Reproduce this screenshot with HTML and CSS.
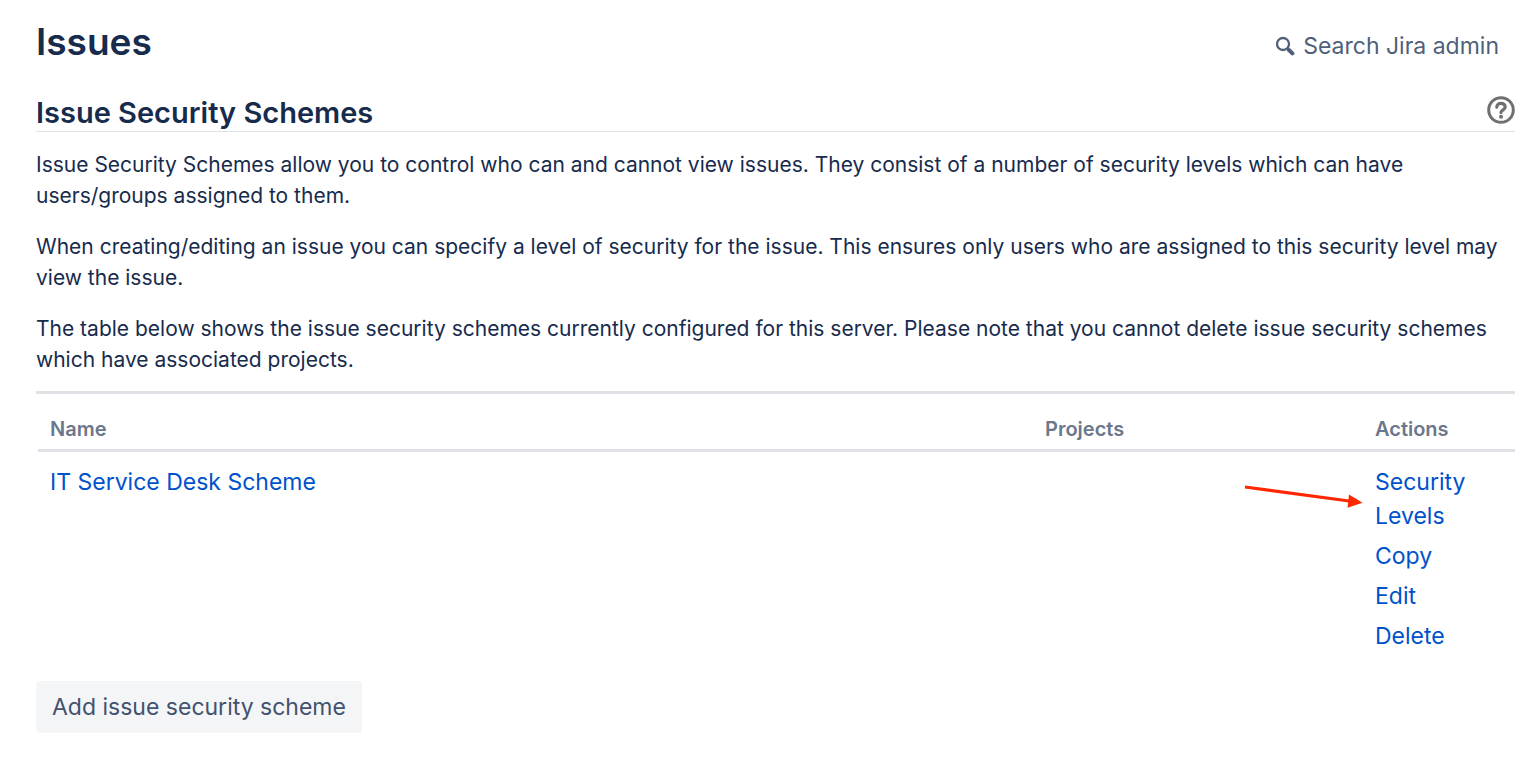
FILE: index.html
```html
<!DOCTYPE html>
<html lang="en">
<head>
  <meta charset="UTF-8">
  <meta name="viewport" content="width=device-width, initial-scale=1.0">
  <title>Issue Security Schemes</title>
  <link rel="stylesheet" href="styles.css">
</head>
<body>
  <header class="page-header">
    <h1>Issues</h1>
    <button type="button" class="admin-search">
      <svg class="search-icon" viewBox="0 0 20 20" aria-hidden="true">
        <circle cx="8" cy="8" r="6" fill="none" stroke="currentColor" stroke-width="2.3"/>
        <path d="M12.2 12.2l1.6 1.6" stroke="currentColor" stroke-width="2.6"/>
        <path d="M14 14l3.4 3.4" stroke="currentColor" stroke-width="4" stroke-linecap="round"/>
      </svg>
      Search Jira admin
    </button>
  </header>

  <main>
    <div class="section-header">
      <h2>Issue Security Schemes</h2>
      <a href="#" class="help-link" aria-label="Help">
        <svg class="help-icon" viewBox="0 0 28 28" aria-hidden="true">
          <circle cx="14" cy="14" r="12.3" fill="none" stroke="currentColor" stroke-width="3"/>
          <path d="M9.8 11.2c0-2.4 1.8-3.9 4.2-3.9s4.2 1.5 4.2 3.7c0 2.9-4.2 2.9-4.2 5.6" fill="none" stroke="currentColor" stroke-width="3.2" stroke-linecap="round"/>
          <circle cx="14" cy="20.7" r="2" fill="currentColor"/>
        </svg>
      </a>
    </div>

    <p>Issue Security Schemes allow you to control who can and cannot view issues. They consist of a number of security levels which can have users/groups assigned to them.</p>
    <p>When creating/editing an issue you can specify a level of security for the issue. This ensures only users who are assigned to this security level may view the issue.</p>
    <p>The table below shows the issue security schemes currently configured for this server. Please note that you cannot delete issue security schemes which have associated projects.</p>

    <div class="table-wrap">
      <table class="schemes">
        <thead>
          <tr>
            <th class="col-name">Name</th>
            <th class="col-projects">Projects</th>
            <th class="col-actions">Actions</th>
          </tr>
        </thead>
        <tbody>
          <tr>
            <td><a href="#">IT Service Desk Scheme</a></td>
            <td></td>
            <td class="actions-cell">
              <ul class="actions">
                <li><a href="#">Security Levels</a></li>
                <li><a href="#">Copy</a></li>
                <li><a href="#">Edit</a></li>
                <li><a href="#">Delete</a></li>
              </ul>
              <svg class="arrow" viewBox="0 0 120 26" aria-hidden="true">
                <path d="M2 4l104 14" stroke="#ff2600" stroke-width="3"/>
                <path d="M106 11.500l13.500 8.200-15 5z" fill="#ff2600"/>
              </svg>
            </td>
          </tr>
        </tbody>
      </table>
    </div>

    <button type="button" class="add-button">Add issue security scheme</button>
  </main>
</body>
</html>
```

FILE: styles.css
```css
* {
  box-sizing: border-box;
}
body {
  margin: 0;
  padding: 16px 23px 24px 36px;
  background: #fff;
  color: #172b4d;
  font-family: Inter, "Liberation Sans", sans-serif;
  font-size: 21px;
  line-height: 31px;
}
h1,
h2 {
  margin: 0;
  font-weight: 600;
}
h1 {
  font-size: 37px;
  line-height: 52px;
}
h2 {
  font-size: 29px;
  line-height: 36px;
}
p {
  margin: 0 0 20px;
}
p:last-of-type {
  margin-bottom: 0;
}
a {
  color: #0052cc;
  text-decoration: none;
}
.page-header {
  display: flex;
  justify-content: space-between;
  align-items: center;
}
.admin-search {
  display: flex;
  align-items: center;
  gap: 8px;
  margin: 8px 16px 0 0;
  padding: 0;
  border: 0;
  background: none;
  color: #505f79;
  font: inherit;
  font-size: 23px;
}
.search-icon {
  width: 20px;
  height: 20px;
}
.section-header {
  display: flex;
  justify-content: space-between;
  align-items: flex-end;
  margin: 27px 0 17px;
  border-bottom: 1px solid #dfe1e6;
}
.help-link {
  display: flex;
  padding-bottom: 7px;
  color: #707070;
}
.help-icon {
  width: 28px;
  height: 28px;
}
.table-wrap {
  margin-top: 16px;
  padding-left: 2px;
  border-top: 3px solid #dfe1e6;
}
.schemes {
  width: 100%;
  border-spacing: 0;
  table-layout: fixed;
}
.schemes th {
  padding: 20px 12px 4px;
  border-bottom: 3px solid #dfe1e6;
  color: #6b778c;
  font-size: 20px;
  font-weight: 600;
  text-align: left;
}
.schemes td {
  padding: 13px 12px 12px;
  font-size: 23px;
  line-height: 34px;
  vertical-align: top;
}
.schemes .col-projects {
  width: 330px;
}
.schemes .col-actions {
  width: 152px;
}
.actions-cell {
  position: relative;
}
.actions {
  margin: 0;
  padding: 0;
  list-style: none;
}
.actions li {
  margin-bottom: 6px;
}
/* callout pointing at the Security Levels action */
.arrow {
  position: absolute;
  top: 31px;
  left: -120px;
  width: 120px;
  height: 26px;
}
.add-button {
  margin-top: 10px;
  padding: 9px 16px;
  border: 0;
  border-radius: 4px;
  background: #f4f5f7;
  color: #42526e;
  font: inherit;
  font-size: 23px;
  line-height: 34px;
}
```
